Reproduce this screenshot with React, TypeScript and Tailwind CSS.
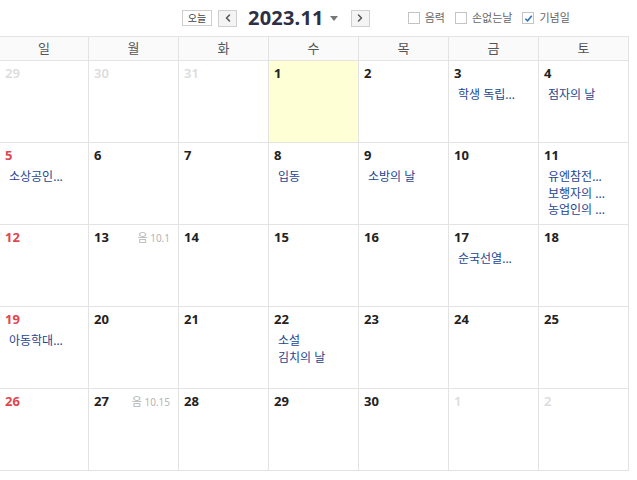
import { ChevronLeft, ChevronRight } from "lucide-react";

type Cell = {
	day: number;
	other?: boolean;
	today?: boolean;
	lunar?: string;
	events?: string[];
};

const weeks: Cell[][] = [
	[
		{ day: 29, other: true },
		{ day: 30, other: true },
		{ day: 31, other: true },
		{ day: 1, today: true },
		{ day: 2 },
		{ day: 3, events: ["학생 독립..."] },
		{ day: 4, events: ["점자의 날"] },
	],
	[
		{ day: 5, events: ["소상공인..."] },
		{ day: 6 },
		{ day: 7 },
		{ day: 8, events: ["입동"] },
		{ day: 9, events: ["소방의 날"] },
		{ day: 10 },
		{ day: 11, events: ["유엔참전...", "보행자의 ...", "농업인의 ..."] },
	],
	[
		{ day: 12 },
		{ day: 13, lunar: "10.1" },
		{ day: 14 },
		{ day: 15 },
		{ day: 16 },
		{ day: 17, events: ["순국선열..."] },
		{ day: 18 },
	],
	[
		{ day: 19, events: ["아동학대..."] },
		{ day: 20 },
		{ day: 21 },
		{ day: 22, events: ["소설", "김치의 날"] },
		{ day: 23 },
		{ day: 24 },
		{ day: 25 },
	],
	[
		{ day: 26 },
		{ day: 27, lunar: "10.15" },
		{ day: 28 },
		{ day: 29 },
		{ day: 30 },
		{ day: 1, other: true },
		{ day: 2, other: true },
	],
];

const dayNames = ["일", "월", "화", "수", "목", "금", "토"];

function Check({ label, checked }: { label: string; checked?: boolean }) {
	return (
		<label className="flex items-center gap-[5px] text-[11px] text-[#666]">
			<span className="flex h-[12px] w-[12px] items-center justify-center border border-[#c4c4c4] bg-white">
				{checked && (
					<svg width="9" height="9" viewBox="0 0 10 10">
						<path d="M1.5 5.2 L4 7.6 L8.6 2" fill="none" stroke="#2a6fb8" strokeWidth="1.7" />
					</svg>
				)}
			</span>
			{label}
		</label>
	);
}

export default function App() {
	return (
		<div
			className="h-[480px] w-[637px] overflow-hidden bg-white"
			style={{ fontFamily: '"Noto Sans", "Noto Sans CJK KR", sans-serif' }}
		>
			<div className="flex h-[36px] items-center">
				<div className="ml-[182px] flex items-center">
					<button
						type="button"
						className="flex h-[16px] w-[30px] items-center justify-center border border-[#cfcfcf] bg-white text-[10px] leading-none text-[#444]"
					>
						오늘
					</button>
					<button
						type="button"
						className="ml-[6px] flex h-[17px] w-[19px] items-center justify-center border border-[#cfcfcf] bg-[#f4f4f4] text-[#555]"
					>
						<ChevronLeft size={12} strokeWidth={3} />
					</button>
					<span className="ml-[11px] text-[20px] font-bold leading-none tracking-[0.2px] text-[#2d3044]">
						2023.11
					</span>
					<svg className="ml-[6px]" width="8" height="5" viewBox="0 0 8 5">
						<path d="M0 0 H8 L4 5 Z" fill="#777" />
					</svg>
					<button
						type="button"
						className="ml-[13px] flex h-[17px] w-[19px] items-center justify-center border border-[#cfcfcf] bg-[#f4f4f4] text-[#555]"
					>
						<ChevronRight size={12} strokeWidth={3} />
					</button>
				</div>
				<div className="ml-[38px] flex items-center gap-[10px]">
					<Check label="음력" />
					<Check label="손없는날" />
					<Check label="기념일" checked />
				</div>
			</div>

			<div className="w-[629px] border-t border-r border-[#e3e3e3]">
				<div className="grid h-[24px] grid-cols-[88px_repeat(6,90px)] border-b border-[#e3e3e3] bg-[#fafafa]">
					{dayNames.map((n, i) => (
						<div
							key={n}
							className={`flex items-center justify-center text-[13px] text-[#555] ${i > 0 ? "border-l border-[#e3e3e3]" : ""}`}
						>
							{n}
						</div>
					))}
				</div>
				{weeks.map((week, wi) => (
					<div key={wi} className="grid h-[82px] grid-cols-[88px_repeat(6,90px)] border-b border-[#e3e3e3]">
						{week.map((c, ci) => {
							const color = c.other
								? "text-[#dcdcdc] font-semibold"
								: ci === 0
									? "text-[#e0464e] font-bold"
									: "text-[#222] font-bold";
							return (
								<div
									key={ci}
									className={`relative px-[5px] pt-[3px] ${ci > 0 ? "border-l border-[#e3e3e3]" : ""} ${c.today ? "bg-[#ffffd5]" : ""}`}
								>
									<div className={`text-[13px] leading-[18px] ${color}`}>{c.day}</div>
									{c.events && (
										<div className="mt-[5px] pl-[4px]">
											{c.events.map((e) => (
												<div key={e} className="truncate text-[12px] leading-[16.5px] text-[#1c4592]">
													{e}
												</div>
											))}
										</div>
									)}
									{c.lunar && (
										<span className="absolute right-[8px] top-[7px] text-[10px] leading-none text-[#b5b5b5]">
											<span className="text-[11px]">음</span> {c.lunar}
										</span>
									)}
								</div>
							);
						})}
					</div>
				))}
			</div>
		</div>
	);
}
